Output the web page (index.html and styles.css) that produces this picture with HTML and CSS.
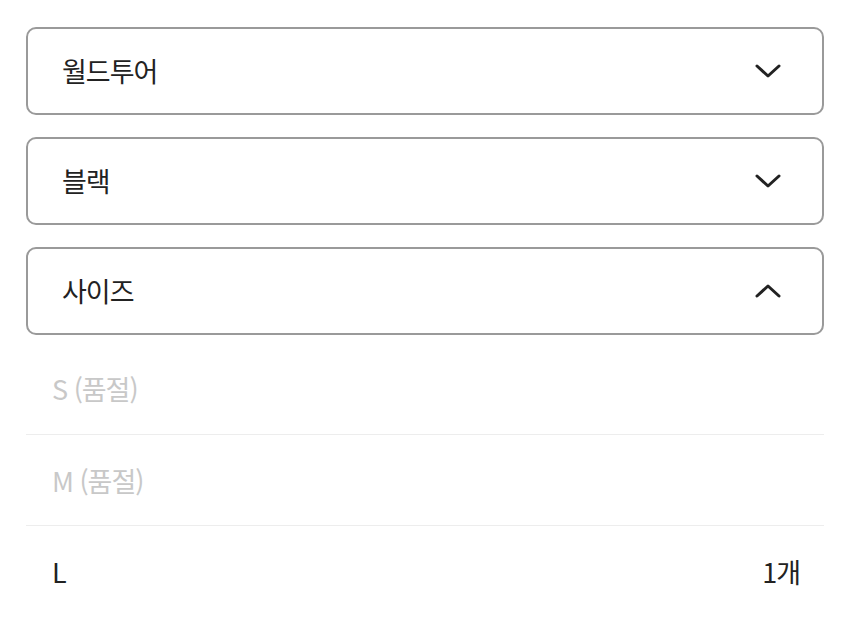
FILE: index.html
```html
<!DOCTYPE html>
<html lang="ko">
<head>
    <meta charset="UTF-8">
    <meta name="viewport" content="width=device-width, initial-scale=1.0">
    <title>옵션 선택</title>
    <link rel="stylesheet" href="styles.css">
</head>
<body>

<div class="options">
    <div class="select">
        <span class="selectLabel">월드투어</span>
        <svg class="chevron" viewBox="0 0 26 14" width="26" height="14"><path d="M2 2 L13 12 L24 2"/></svg>
    </div>

    <div class="select">
        <span class="selectLabel">블랙</span>
        <svg class="chevron" viewBox="0 0 26 14" width="26" height="14"><path d="M2 2 L13 12 L24 2"/></svg>
    </div>

    <div class="select">
        <span class="selectLabel">사이즈</span>
        <svg class="chevron" viewBox="0 0 26 14" width="26" height="14"><path d="M2 12 L13 2 L24 12"/></svg>
    </div>

    <ul class="sizeList">
        <li class="sizeItem soldOut"><span>S (품절)</span></li>
        <li class="sizeItem soldOut"><span>M (품절)</span></li>
        <li class="sizeItem"><span>L</span><span class="stock">1개</span></li>
    </ul>
</div>

</body>
</html>
```

FILE: styles.css
```css
body {
    font-family: "Noto Sans CJK KR", "Noto Sans", sans-serif;
    margin: 0;
    padding: 0;
    color: #222;
    background-color: #fff;
}

.options {
    padding: 27px 26px 0 26px;
    display: flex;
    flex-direction: column;
    gap: 22px;
}

.select {
    height: 84px;
    border: 2px solid #9a9a9a;
    border-radius: 10px;
    display: flex;
    align-items: center;
    justify-content: space-between;
    padding: 0 41px 0 34px;
}

.selectLabel {
    font-size: 27px;
    letter-spacing: -1px;
    margin-top: -2px;
}

.chevron path {
    fill: none;
    stroke: #222;
    stroke-width: 3;
    stroke-linecap: round;
    stroke-linejoin: round;
}

.sizeList {
    list-style: none;
    margin: -14px 0 0 0;
    padding: 0;
}

.sizeItem {
    height: 90px;
    display: flex;
    align-items: center;
    justify-content: space-between;
    padding: 0 24px 0 26px;
    font-size: 27px;
    letter-spacing: -1px;
    border-bottom: 1px solid #ededed;
}

.sizeItem:first-child {
    height: 91px;
}

.sizeItem:last-child {
    border-bottom: none;
}

.soldOut {
    color: #c8c8c8;
}
```
